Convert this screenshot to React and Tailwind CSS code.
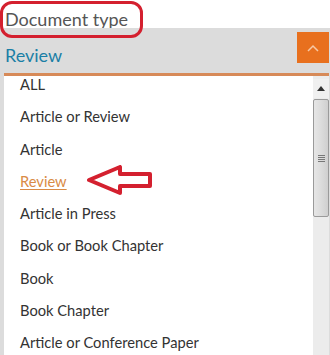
import React from "react";

const items = [
  "ALL",
  "Article or Review",
  "Article",
  "Review",
  "Article in Press",
  "Book or Book Chapter",
  "Book",
  "Book Chapter",
  "Article or Conference Paper",
];

export default function App() {
  return (
    <div
      className="relative w-[330px] h-[355px] overflow-hidden bg-white flex flex-col"
      style={{ fontFamily: "Lato, 'Open Sans', sans-serif" }}
    >
      <div className="h-[29px] flex items-center pl-[5px] pt-[10px] text-[18px] text-[#555555] leading-none">
        Document type
      </div>
      <div className="flex-1 bg-[#dcdcdc] flex flex-col">
        <div className="h-[45px] flex items-start justify-between">
          <div className="pl-[5px] pt-[18px] text-[18px] leading-none text-[#1a7fa6]">Review</div>
          <div className="mt-[4px] mr-[1px] w-[32px] h-[31px] bg-[#e8701e] flex items-center justify-center">
            <svg width="12" height="8" viewBox="0 0 12 8">
              <path d="M1 7 L6 2 L11 7" fill="none" stroke="#f6c9a6" strokeWidth="1.5" />
            </svg>
          </div>
        </div>
        <div className="flex-1 ml-[4px] mr-[1px] border-t-[3px] border-[#d78a58] bg-white flex overflow-hidden">
          <div className="flex-1 overflow-hidden">
            <div className="-mt-[8px] pl-[16px]">
              {items.map((t, i) => (
                <div key={i} className="h-[32.25px] flex items-center text-[14.7px] text-[#333333]">
                  {t === "Review" ? (
                    <span className="text-[#d98b45] underline underline-offset-2">{t}</span>
                  ) : (
                    t
                  )}
                </div>
              ))}
            </div>
          </div>
          <div className="w-[16px] bg-[#ececec] flex flex-col pt-[3px]">
            <div className="h-[19px] bg-[#f0f0f0] flex items-center justify-center">
              <svg width="8" height="5" viewBox="0 0 8 5">
                <path d="M0 5 L4 0 L8 5 Z" fill="#333" />
              </svg>
            </div>
            <div className="mt-[1px] h-[118px] rounded-[2px] border border-[#9a9a9a] bg-gradient-to-r from-[#e6e6e6] via-[#dcdcdc] to-[#cfcfcf] flex items-center justify-center">
              <div className="flex flex-col gap-[1px]">
                <div className="w-[7px] h-[1px] bg-[#777]" />
                <div className="w-[7px] h-[1px] bg-[#777]" />
                <div className="w-[7px] h-[1px] bg-[#777]" />
                <div className="w-[7px] h-[1px] bg-[#777]" />
              </div>
            </div>
          </div>
        </div>
      </div>

      {/* red annotation oval */}
      <div className="absolute left-[0px] top-[1px] w-[143px] h-[37px] rounded-[12px] border-[3px] border-[#d4202f]" />

      {/* red annotation arrow */}
      <svg className="absolute left-[86px] top-[165px]" width="68" height="30" viewBox="0 0 68 30">
        <path
          d="M3 15 L34 2 L34 9 L64 9 L64 21 L34 21 L34 28 Z"
          fill="white"
          stroke="#d4202f"
          strokeWidth="4"
          strokeLinejoin="round"
        />
      </svg>
    </div>
  );
}
